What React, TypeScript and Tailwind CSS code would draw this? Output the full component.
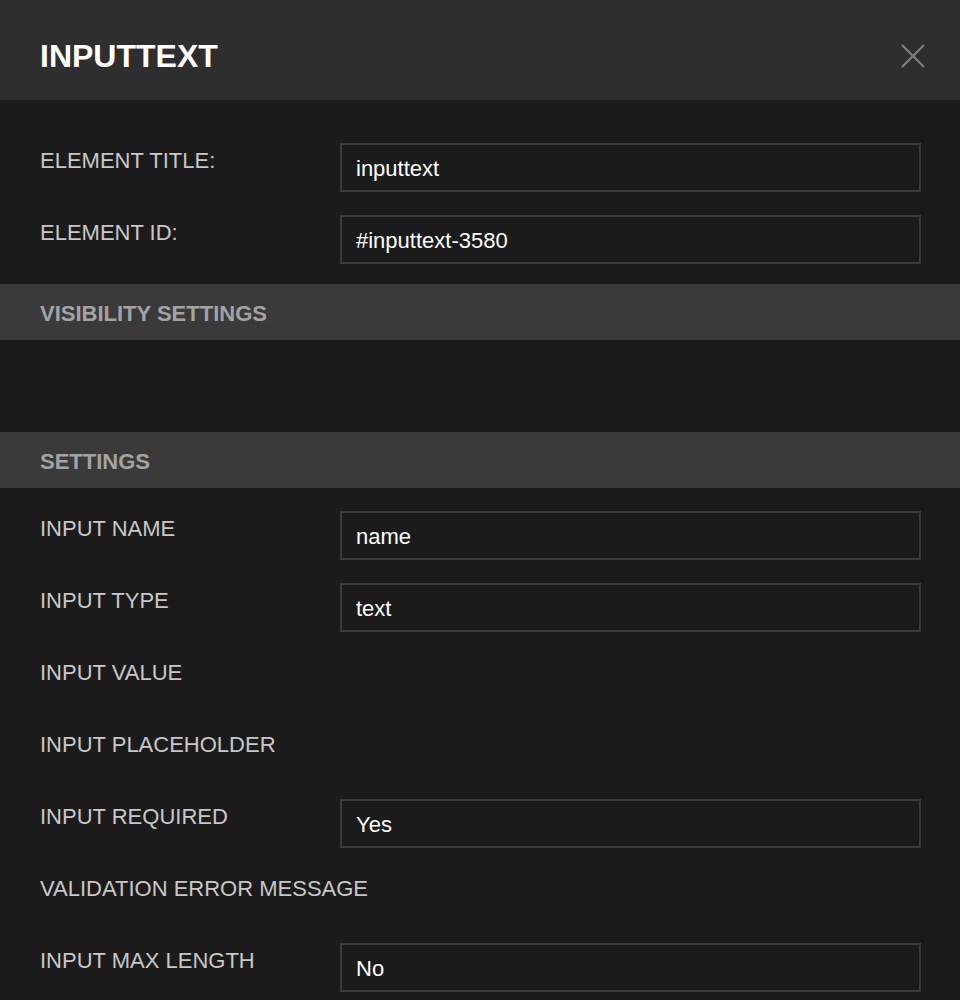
import React from "react";

type Row = { label: string; value?: string };

const general: Row[] = [
  { label: "ELEMENT TITLE:", value: "inputtext" },
  { label: "ELEMENT ID:", value: "#inputtext-3580" },
];

const settings: Row[] = [
  { label: "INPUT NAME", value: "name" },
  { label: "INPUT TYPE", value: "text" },
  { label: "INPUT VALUE" },
  { label: "INPUT PLACEHOLDER" },
  { label: "INPUT REQUIRED", value: "Yes" },
  { label: "VALIDATION ERROR MESSAGE" },
  { label: "INPUT MAX LENGTH", value: "No" },
];

function FieldRow({ label, value }: Row) {
  return (
    <div className="flex items-start h-[72px]">
      <div className="w-[300px] shrink-0 whitespace-nowrap pt-[1px] leading-[34px] text-[22px] text-[#c8c8c8]">
        {label}
      </div>
      {value !== undefined && (
        <div className="w-[581px] shrink-0 h-[49px] border-2 border-[#3a3a3a] bg-[#1b1b1b] flex items-center pl-[14px] pt-[2px] text-[22px] text-white">
          {value}
        </div>
      )}
    </div>
  );
}

function SectionBar({ title }: { title: string }) {
  return (
    <div className="h-[56px] bg-[#3a3a3a] flex items-center px-10 pt-[3px] text-[22px] font-bold text-[#a3a3a3]">
      {title}
    </div>
  );
}

export default function App() {
  return (
    <div
      className="w-[960px] h-[1000px] overflow-hidden bg-[#1b1b1b]"
      style={{ fontFamily: '"Liberation Sans", Arial, sans-serif' }}
    >
      {/* Header */}
      <div className="h-[100px] bg-[#2e2e2e] flex items-center justify-between pl-10 pr-[35px] pt-[12px]">
        <h1 className="text-[32px] font-bold text-white">INPUTTEXT</h1>
        <button className="w-[24px] h-[24px] flex items-center justify-center">
          <svg width="24" height="24" viewBox="0 0 24 24" fill="none" stroke="#808080" strokeWidth="2">
            <path d="M1 1 L23 23 M23 1 L1 23" />
          </svg>
        </button>
      </div>

      {/* General */}
      <div className="h-[184px] overflow-hidden pt-[43px] px-10">
        {general.map((r) => (
          <FieldRow key={r.label} {...r} />
        ))}
      </div>

      <SectionBar title="VISIBILITY SETTINGS" />
      <div className="h-[92px]" />

      <SectionBar title="SETTINGS" />
      <div className="pt-[23px] px-10">
        {settings.map((r) => (
          <FieldRow key={r.label} {...r} />
        ))}
      </div>
    </div>
  );
}
